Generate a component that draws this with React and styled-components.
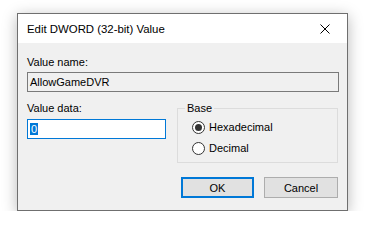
import React from "react";
import styled, { createGlobalStyle } from "styled-components";

const GlobalStyle = createGlobalStyle`
  html, body {
    margin: 0;
    padding: 0;
    background: #ffffff;
  }
  body {
    font-family: "Liberation Sans", Arial, sans-serif;
    color: #000;
  }
`;

const Page = styled.div`
  padding: 13px 0 0 17px;
`;

const Window = styled.div`
  width: 331px;
  box-sizing: border-box;
  border: 1px solid #6f6f6f;
  background: #f0f0f0;
  box-shadow: 0 3px 14px rgba(0, 0, 0, 0.28);
`;

const TitleBar = styled.div`
  height: 29px;
  background: #ffffff;
  display: flex;
  align-items: center;
  justify-content: space-between;
  padding: 0 0 0 9px;
`;

const Title = styled.span`
  font-size: 11.4px;
  line-height: 14px;
`;

const CloseButton = styled.div`
  width: 46px;
  height: 29px;
  display: flex;
  align-items: center;
  justify-content: center;
  margin-right: -1px;
`;

const Body = styled.div`
  padding: 12px 8px 12px 9px;
`;

const Label = styled.div`
  font-size: 11px;
  line-height: 14px;
  margin-top: ${(p) => p.$top || 0}px;
`;

const TextBox = styled.div`
  box-sizing: border-box;
  height: 20px;
  width: ${(p) => (p.$width ? `${p.$width}px` : "100%")};
  margin-top: ${(p) => p.$top || 0}px;
  border: 1px solid ${(p) => (p.$focused ? "#0078d7" : "#7a7a7a")};
  background: ${(p) => (p.$focused ? "#ffffff" : "#f0f0f0")};
  font-size: 11px;
  line-height: 18px;
  padding-left: 2px;
  white-space: nowrap;
`;

const Selected = styled.span`
  background: #0078d7;
  color: #ffffff;
  padding: 0 1px;
`;

const DataRow = styled.div`
  display: grid;
  grid-template-columns: 139px 1fr;
  column-gap: 11px;
  margin-top: 9px;
`;

const Group = styled.fieldset`
  margin: 0 1px 0 0;
  padding: 4px 7px 6px 7px;
  border: 1px solid #dcdcdc;
  min-width: 0;
`;

const Legend = styled.legend`
  font-size: 11px;
  line-height: 14px;
  padding: 0 2px;
`;

const RadioRow = styled.div`
  display: flex;
  align-items: center;
  height: 16px;
  margin: ${(p) => (p.$first ? 0 : 5)}px 0 0 7px;
  font-size: 11px;
`;

const RadioCircle = styled.span`
  box-sizing: border-box;
  width: 13px;
  height: 13px;
  border-radius: 50%;
  border: 1px solid #333333;
  background: #ffffff;
  display: flex;
  align-items: center;
  justify-content: center;
  margin-right: 4px;

  &::after {
    content: "";
    width: 7px;
    height: 7px;
    border-radius: 50%;
    background: #333333;
    display: ${(p) => (p.$checked ? "block" : "none")};
  }
`;

const Buttons = styled.div`
  display: flex;
  justify-content: flex-end;
  gap: 10px;
  margin-top: 14px;
  padding-right: 1px;
`;

const Button = styled.div`
  box-sizing: border-box;
  width: ${(p) => p.$width}px;
  height: 21px;
  border: ${(p) => (p.$default ? "2px solid #0078d7" : "1px solid #adadad")};
  background: #e1e1e1;
  font-size: 11px;
  display: flex;
  align-items: center;
  justify-content: center;
`;

export default function App() {
  return (
    <Page>
      <GlobalStyle />
      <Window>
        <TitleBar>
          <Title>Edit DWORD (32-bit) Value</Title>
          <CloseButton>
            <svg width="10" height="10" viewBox="0 0 10 10">
              <path d="M0.5 0.5 L9.5 9.5 M9.5 0.5 L0.5 9.5" stroke="#000" strokeWidth="1" />
            </svg>
          </CloseButton>
        </TitleBar>
        <Body>
          <Label>Value name:</Label>
          <TextBox $top={3}>AllowGameDVR</TextBox>
          <DataRow>
            <div>
              <Label>Value data:</Label>
              <TextBox $top={4} $width={139} $focused>
                <Selected>0</Selected>
              </TextBox>
            </div>
            <Group>
              <Legend>Base</Legend>
              <RadioRow $first>
                <RadioCircle $checked />
                Hexadecimal
              </RadioRow>
              <RadioRow>
                <RadioCircle />
                Decimal
              </RadioRow>
            </Group>
          </DataRow>
          <Buttons>
            <Button $width={73} $default>OK</Button>
            <Button $width={74}>Cancel</Button>
          </Buttons>
        </Body>
      </Window>
    </Page>
  );
}
